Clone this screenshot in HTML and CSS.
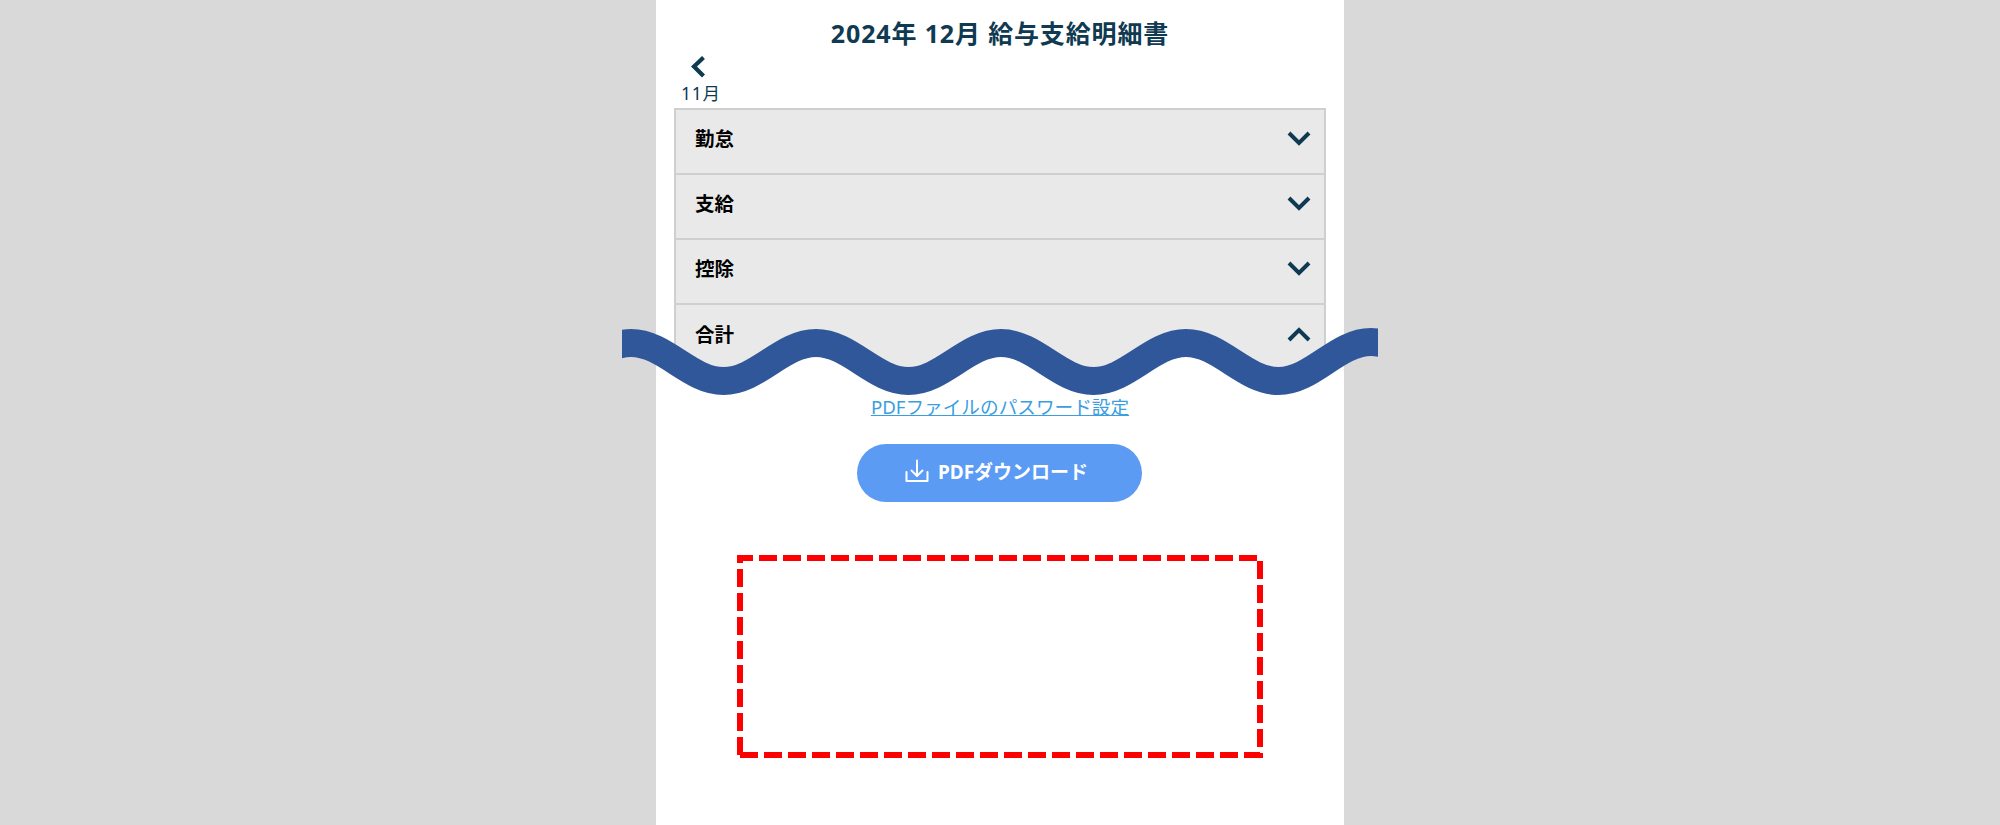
FILE: index.html
```html
<!DOCTYPE html>
<html lang="ja">
<head>
<meta charset="utf-8">
<title>給与支給明細書</title>
<link rel="stylesheet" href="styles.css">
</head>
<body>
<main class="panel">
  <h1 class="title">2024年 12月 給与支給明細書</h1>
  <a class="prev" href="#">
    <svg class="prev-icon" width="16" height="24" viewBox="0 0 16 24"><path d="M13.500 2.500 4 11.500l9.500 9.500" fill="none" stroke="#0f3a52" stroke-width="4.200"/></svg>
    <span class="prev-label">11月</span>
  </a>
  <section class="accordion">
    <div class="row"><span class="row-label">勤怠</span><svg class="chev" width="24" height="16" viewBox="0 0 24 16"><path d="M2 3l10 10L22 3" fill="none" stroke="#0f3a52" stroke-width="4"/></svg></div>
    <div class="row"><span class="row-label">支給</span><svg class="chev" width="24" height="16" viewBox="0 0 24 16"><path d="M2 3l10 10L22 3" fill="none" stroke="#0f3a52" stroke-width="4"/></svg></div>
    <div class="row"><span class="row-label">控除</span><svg class="chev" width="24" height="16" viewBox="0 0 24 16"><path d="M2 3l10 10L22 3" fill="none" stroke="#0f3a52" stroke-width="4"/></svg></div>
    <div class="row"><span class="row-label">合計</span><svg class="chev" width="24" height="16" viewBox="0 0 24 16"><path d="M2 13 12 3l10 10" fill="none" stroke="#0f3a52" stroke-width="4"/></svg></div>
  </section>
  <svg class="wave" width="756" height="80" viewBox="0 0 756 80">
    <defs><clipPath id="panel-clip"><rect x="34" y="0" width="688" height="80"/></clipPath></defs>
    <path clip-path="url(#panel-clip)" fill="#fff" d="M-83.500 62C-49.500 62-25 24 9 24C43 24 67.500 62 101.500 62C135.500 62 160 24 194 24C228 24 252.500 62 286.500 62C320.500 62 345 24 379 24C413 24 437.500 62 471.500 62C505.500 62 530 24 564 24C598 24 622.500 62 656.500 62C690.500 62 715 24 749 24C783 24 807.500 62 841.500 62V80H-83.500Z"/>
    <path fill="none" stroke="#30579a" stroke-width="28" d="M-83.500 62C-49.500 62-25 24 9 24C43 24 67.500 62 101.500 62C135.500 62 160 24 194 24C228 24 252.500 62 286.500 62C320.500 62 345 24 379 24C413 24 437.500 62 471.500 62C505.500 62 530 24 564 24C598 24 622.500 62 656.500 62C690.500 62 715 23 749 23C783 23 807.500 62 841.500 62"/>
  </svg>
  <a class="pw-link" href="#">PDFファイルのパスワード設定</a>
  <button class="dl-btn" type="button">
    <svg width="24" height="24" viewBox="0 0 24 24" fill="none" stroke="#fff" stroke-width="2" stroke-linecap="round" stroke-linejoin="round"><path d="M1.500 13v9h21v-9"/><path d="M12 1.500v15"/><path d="M6.500 11.500 12 17l5.500-5.500"/></svg>
    <span>PDFダウンロード</span>
  </button>
  <svg class="dashed" width="526" height="203" viewBox="0 0 526 203" fill="none" stroke="#f00" stroke-width="6">
    <path d="M0 3H520" stroke-dasharray="18 6" stroke-dashoffset="2"/>
    <path d="M3 0V200" stroke-dasharray="18 6" stroke-dashoffset="10"/>
    <path d="M523 6V203" stroke-dasharray="18 6"/>
    <path d="M3 200H523" stroke-dasharray="18 6"/>
  </svg>
</main>
</body>
</html>
```
FILE: styles.css
```css
html, body { margin: 0; padding: 0; }
body {
  background: #d9d9d9;
  font-family: "Noto Sans", "Noto Sans CJK JP", sans-serif;
  height: 825px;
  overflow: hidden;
}
.panel {
  position: relative;
  width: 688px;
  height: 825px;
  margin: 0 auto;
  background: #fff;
  display: flex;
  flex-direction: column;
  align-items: center;
}
.title {
  margin: 16px 0 2px;
  font-size: 25px;
  line-height: 34px;
  font-weight: 700;
  color: #0f3a52;
  letter-spacing: 0.850px;
}
.prev {
  align-self: flex-start;
  margin-left: 25px;
  display: flex;
  flex-direction: column;
  align-items: flex-start;
  color: #0f3a52;
  text-decoration: none;
}
.prev-icon { display: block; margin: 3px 0 0 9px; }
.prev-label { font-size: 17.500px; line-height: 24px; white-space: nowrap; margin-top: 2px; letter-spacing: 0.700px; }
.accordion {
  width: 652px;
  box-sizing: border-box;
  border: 2px solid #cfcfcf;
  border-bottom: 0;
  background: #e9e9e9;
  margin-top: 3px;
  height: 261px;
}
.row {
  height: 63px;
  border-bottom: 2px solid #cfcfcf;
  display: flex;
  align-items: center;
  justify-content: space-between;
  padding: 0 13px 0 19px;
}
.row:last-child { border-bottom: 0; }
.row-label { font-size: 19.500px; font-weight: 700; color: #000; margin-top: -8px; }
.chev { margin-top: -7px; }
.row:last-child .row-label { margin-top: -6px; }
.row:last-child .chev { margin-top: -4px; }
.wave { position: absolute; left: -34px; top: 319px; }
.pw-link {
  margin-top: 24px;
  font-size: 18.650px;
  line-height: 28px;
  color: #3a9ee0;
  text-decoration: underline;
}
.dl-btn {
  margin: 23px 2px 0 0;
  width: 285px;
  height: 58px;
  border: 0;
  border-radius: 29px;
  background: #5b9bf4;
  color: #fff;
  font: 700 19px "Noto Sans", "Noto Sans CJK JP", sans-serif;
  display: flex;
  align-items: center;
  justify-content: center;
  gap: 9px;
  padding: 0 5px 4px 0;
  box-sizing: border-box;
}
.dashed { display: block; margin-top: 53px; }
```
